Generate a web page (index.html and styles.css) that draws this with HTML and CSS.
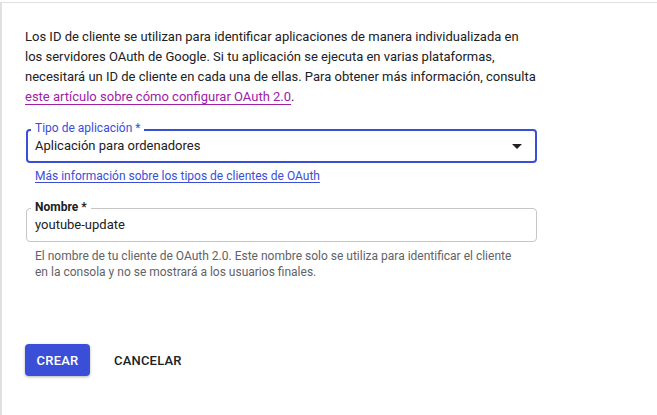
FILE: index.html
```html
<!DOCTYPE html>
<html lang="es">

<head>
    <meta charset="UTF-8">
    <meta name="viewport" content="width=device-width, initial-scale=1.0">
    <title>Crear ID de cliente de OAuth</title>
    <link rel="stylesheet" href="styles.css">
</head>

<body>
    <div class="panel">
        <p class="intro">
            Los ID de cliente se utilizan para identificar aplicaciones de manera individualizada en
            los servidores OAuth de Google. Si tu aplicación se ejecuta en varias plataformas,
            necesitará un ID de cliente en cada una de ellas. Para obtener más información, consulta
            <a href="#" class="visited-link">este artículo sobre cómo configurar OAuth 2.0</a>.
        </p>

        <div class="field field-focused">
            <span class="field-label">Tipo de aplicación *</span>
            <div class="field-value">Aplicación para ordenadores</div>
            <svg class="field-arrow" width="10" height="5" viewBox="0 0 10 5">
                <path d="M0 0 L10 0 L5 5 Z" fill="#202124" />
            </svg>
        </div>
        <a href="#" class="info-link">Más información sobre los tipos de clientes de OAuth</a>

        <div class="field field-name">
            <span class="field-label">Nombre *</span>
            <div class="field-value">youtube-update</div>
        </div>
        <small class="hint">El nombre de tu cliente de OAuth 2.0. Este nombre solo se utiliza para identificar el cliente
            en la consola y no se mostrará a los usuarios finales.</small>

        <div class="actions">
            <button class="btn-primary">Crear</button>
            <button class="btn-text">Cancelar</button>
        </div>
    </div>
</body>

</html>
```

FILE: styles.css
```css
body {
    margin: 0;
    font-family: Roboto, 'Liberation Sans', Arial, sans-serif;
    background-color: #fff;
    color: #202124;
}

.panel {
    margin-top: 2px;
    border-top: 1px solid #e0e0e0;
    border-left: 2px solid #e0e0e0;
    padding: 24px 0 40px 23px;
    height: 420px;
    box-sizing: border-box;
}

.intro {
    margin: 0;
    width: 513px;
    font-size: 13px;
    line-height: 20px;
}

.visited-link {
    color: #a020a8;
    text-decoration: underline;
    text-underline-offset: 3px;
}

.field {
    position: relative;
    width: 511px;
    height: 34px;
    margin-left: 1px;
    box-sizing: border-box;
    border: 1px solid #c6c6c6;
    border-radius: 4px;
    display: flex;
    align-items: center;
    padding-left: 8px;
}

.field-focused {
    margin-top: 22px;
    border: 2px solid #3b4ed8;
    padding-left: 7px;
}

.field-label {
    position: absolute;
    left: 4px;
    top: -10px;
    padding: 0 4px;
    background-color: #fff;
    font-size: 12px;
    line-height: 16px;
}

.field-focused .field-label {
    top: -11px;
    left: 3px;
    color: #3b4ed8;
}

.field-name .field-label {
    font-weight: 700;
    color: #202124;
}

.field-value {
    font-size: 13px;
    line-height: 20px;
}

.field-arrow {
    position: absolute;
    right: 13px;
    top: 13px;
}

.info-link {
    display: inline-block;
    margin: 5px 0 0 10px;
    font-size: 12px;
    line-height: 16px;
    color: #3b4ed8;
    text-decoration: underline;
    text-underline-offset: 2px;
}

.field-name {
    margin-top: 24px;
}

.hint {
    display: block;
    width: 490px;
    margin: 6px 0 0 10px;
    font-size: 12px;
    line-height: 16px;
    color: #5f6368;
}

.actions {
    display: flex;
    align-items: center;
    gap: 24px;
    margin-top: 64px;
}

button {
    font-family: inherit;
    font-size: 13px;
    font-weight: 500;
    text-transform: uppercase;
    letter-spacing: 0.2px;
    height: 32px;
    border: none;
    border-radius: 4px;
    cursor: pointer;
}

.btn-primary {
    width: 65px;
    background-color: #3b4ed8;
    color: #fff;
    box-shadow: 0 1px 3px rgba(0, 0, 0, 0.3);
}

.btn-text {
    background: none;
    color: #202124;
    padding: 0;
    width: 66px;
}
```
